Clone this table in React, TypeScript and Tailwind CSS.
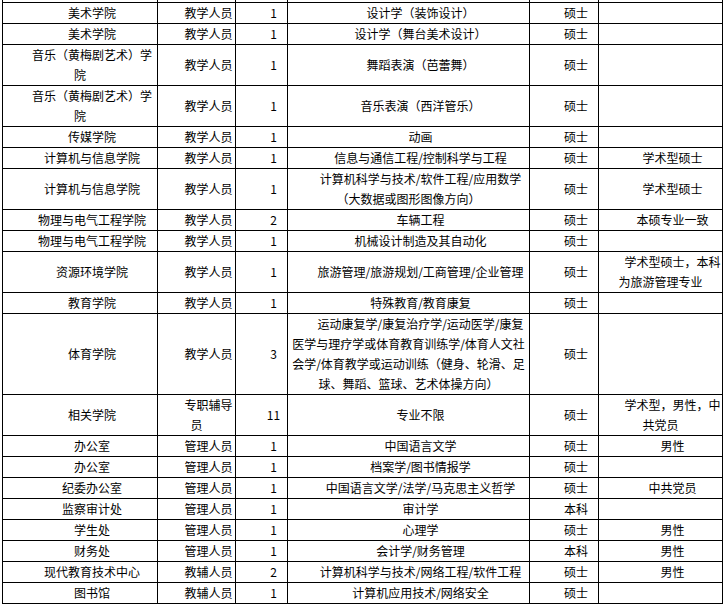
// 招聘岗位一览表（截图复刻）

type Row = [string, string, string, string, string, string]

const rows: Row[] = [
  ['美术学院', '教学人员', '1', '设计学（装饰设计）', '硕士', ''],
  ['美术学院', '教学人员', '1', '设计学（舞台美术设计）', '硕士', ''],
  ['音乐（黄梅剧艺术）学|院', '教学人员', '1', '舞蹈表演（芭蕾舞）', '硕士', ''],
  ['音乐（黄梅剧艺术）学|院', '教学人员', '1', '音乐表演（西洋管乐）', '硕士', ''],
  ['传媒学院', '教学人员', '1', '动画', '硕士', ''],
  ['计算机与信息学院', '教学人员', '1', '信息与通信工程/控制科学与工程', '硕士', '学术型硕士'],
  ['计算机与信息学院', '教学人员', '1', '计算机科学与技术/软件工程/应用数学|（大数据或图形图像方向）', '硕士', '学术型硕士'],
  ['物理与电气工程学院', '教学人员', '2', '车辆工程', '硕士', '本硕专业一致'],
  ['物理与电气工程学院', '教学人员', '1', '机械设计制造及其自动化', '硕士', ''],
  ['资源环境学院', '教学人员', '1', '旅游管理/旅游规划/工商管理/企业管理', '硕士', '学术型硕士，本科|为旅游管理专业'],
  ['教育学院', '教学人员', '1', '特殊教育/教育康复', '硕士', ''],
  [
    '体育学院',
    '教学人员',
    '3',
    '运动康复学/康复治疗学/运动医学/康复|医学与理疗学或体育教育训练学/体育人文社|会学/体育教学或运动训练（健身、轮滑、足|球、舞蹈、篮球、艺术体操方向）',
    '硕士',
    '',
  ],
  ['相关学院', '专职辅导|员', '11', '专业不限', '硕士', '学术型，男性，中|共党员'],
  ['办公室', '管理人员', '1', '中国语言文学', '硕士', '男性'],
  ['办公室', '管理人员', '1', '档案学/图书情报学', '硕士', ''],
  ['纪委办公室', '管理人员', '1', '中国语言文学/法学/马克思主义哲学', '硕士', '中共党员'],
  ['监察审计处', '管理人员', '1', '审计学', '本科', ''],
  ['学生处', '管理人员', '1', '心理学', '硕士', '男性'],
  ['财务处', '管理人员', '1', '会计学/财务管理', '本科', '男性'],
  ['现代教育技术中心', '教辅人员', '2', '计算机科学与技术/网络工程/软件工程', '硕士', '男性'],
  ['图书馆', '教辅人员', '1', '计算机应用技术/网络安全', '硕士', ''],
]

function Cell({ text }: { text: string }) {
  const lines = text.split('|')
  return (
    <td className="border border-black p-0 text-center align-middle indent-[24px] leading-[20px] whitespace-nowrap">
      {lines.map((l, i) => (
        <span key={i}>
          {i > 0 && <br />}
          {l}
        </span>
      ))}
    </td>
  )
}

export default function App() {
  return (
    <div
      className="w-[724px] h-[606px] overflow-hidden bg-white text-black text-[12px]"
      style={{ fontFamily: '"Noto Sans CJK SC", "Liberation Sans", sans-serif' }}
    >
      <table className="ml-[2px] w-[720px] table-fixed border-collapse">
        <colgroup>
          <col className="w-[155px]" />
          <col className="w-[78px]" />
          <col className="w-[52px]" />
          <col className="w-[242px]" />
          <col className="w-[69px]" />
          <col className="w-[124px]" />
        </colgroup>
        <tbody>
          {/* 上一行被截掉，只露出竖线 */}
          <tr className="h-[2px]">
            {[0, 1, 2, 3, 4, 5].map((i) => (
              <td key={i} className="border-x border-b border-black p-0 h-[2px] leading-none text-[0px]" />
            ))}
          </tr>
          {rows.map((r, i) => (
            <tr key={i}>
              {r.map((c, j) => (
                <Cell key={j} text={c} />
              ))}
            </tr>
          ))}
        </tbody>
      </table>
    </div>
  )
}
